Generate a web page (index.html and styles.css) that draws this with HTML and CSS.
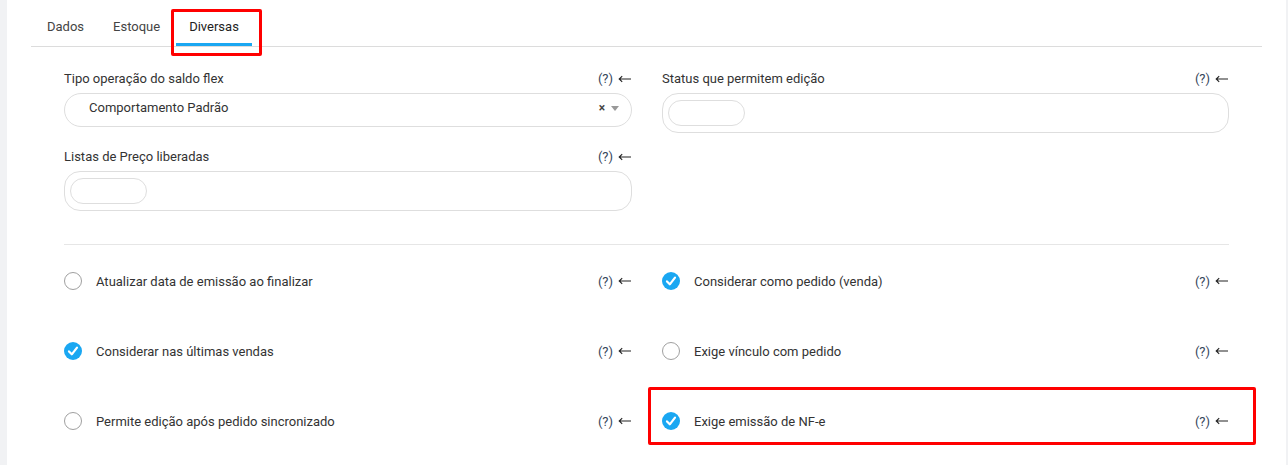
FILE: index.html
```html
<!DOCTYPE html>
<html lang="pt-BR">
<head>
    <meta charset="UTF-8">
    <meta name="viewport" content="width=device-width, initial-scale=1.0">
    <title>Produto - Diversas</title>
    <link rel="stylesheet" href="styles.css">
</head>
<body>
    <div class="card">
        <ul class="tabs">
            <li class="tab">Dados</li>
            <li class="tab">Estoque</li>
            <li class="tab active">Diversas</li>
        </ul>
        <div class="mark mark-tab"></div>

        <div class="form">
            <div class="fields">
                <div class="field">
                    <div class="label-row">
                        <span>Tipo operação do saldo flex</span>
                        <span class="help"><span class="q">(?)</span><svg class="arrow" width="13" height="8" viewBox="0 0 13 8"><path d="M13 4 H1.2 M4.2 1.2 L1.2 4 L4.2 6.8" fill="none" stroke="#222" stroke-width="1.1"/></svg></span>
                    </div>
                    <div class="select">
                        <span class="select-text">Comportamento Padrão</span>
                        <span class="clear">×</span>
                        <span class="caret"></span>
                    </div>
                </div>
                <div class="field">
                    <div class="label-row">
                        <span>Status que permitem edição</span>
                        <span class="help"><span class="q">(?)</span><svg class="arrow" width="13" height="8" viewBox="0 0 13 8"><path d="M13 4 H1.2 M4.2 1.2 L1.2 4 L4.2 6.8" fill="none" stroke="#222" stroke-width="1.1"/></svg></span>
                    </div>
                    <div class="tags"><span class="tag-input"></span></div>
                </div>
                <div class="field">
                    <div class="label-row">
                        <span>Listas de Preço liberadas</span>
                        <span class="help"><span class="q">(?)</span><svg class="arrow" width="13" height="8" viewBox="0 0 13 8"><path d="M13 4 H1.2 M4.2 1.2 L1.2 4 L4.2 6.8" fill="none" stroke="#222" stroke-width="1.1"/></svg></span>
                    </div>
                    <div class="tags"><span class="tag-input"></span></div>
                </div>
            </div>

            <hr class="divider">

            <div class="checks">
                <div class="check">
                    <span class="radio"></span>
                    <span class="check-label">Atualizar data de emissão ao finalizar</span>
                    <span class="help"><span class="q">(?)</span><svg class="arrow" width="13" height="8" viewBox="0 0 13 8"><path d="M13 4 H1.2 M4.2 1.2 L1.2 4 L4.2 6.8" fill="none" stroke="#222" stroke-width="1.1"/></svg></span>
                </div>
                <div class="check">
                    <svg class="tick" width="18" height="18" viewBox="0 0 18 18"><circle cx="9" cy="9" r="9" fill="#1aa7f2"/><path d="M5 9.4 L7.8 12.3 L13 5.6" fill="none" stroke="#fff" stroke-width="2.2" stroke-linecap="round" stroke-linejoin="round"/></svg>
                    <span class="check-label">Considerar como pedido (venda)</span>
                    <span class="help"><span class="q">(?)</span><svg class="arrow" width="13" height="8" viewBox="0 0 13 8"><path d="M13 4 H1.2 M4.2 1.2 L1.2 4 L4.2 6.8" fill="none" stroke="#222" stroke-width="1.1"/></svg></span>
                </div>
                <div class="check">
                    <svg class="tick" width="18" height="18" viewBox="0 0 18 18"><circle cx="9" cy="9" r="9" fill="#1aa7f2"/><path d="M5 9.4 L7.8 12.3 L13 5.6" fill="none" stroke="#fff" stroke-width="2.2" stroke-linecap="round" stroke-linejoin="round"/></svg>
                    <span class="check-label">Considerar nas últimas vendas</span>
                    <span class="help"><span class="q">(?)</span><svg class="arrow" width="13" height="8" viewBox="0 0 13 8"><path d="M13 4 H1.2 M4.2 1.2 L1.2 4 L4.2 6.8" fill="none" stroke="#222" stroke-width="1.1"/></svg></span>
                </div>
                <div class="check">
                    <span class="radio"></span>
                    <span class="check-label">Exige vínculo com pedido</span>
                    <span class="help"><span class="q">(?)</span><svg class="arrow" width="13" height="8" viewBox="0 0 13 8"><path d="M13 4 H1.2 M4.2 1.2 L1.2 4 L4.2 6.8" fill="none" stroke="#222" stroke-width="1.1"/></svg></span>
                </div>
                <div class="check">
                    <span class="radio"></span>
                    <span class="check-label">Permite edição após pedido sincronizado</span>
                    <span class="help"><span class="q">(?)</span><svg class="arrow" width="13" height="8" viewBox="0 0 13 8"><path d="M13 4 H1.2 M4.2 1.2 L1.2 4 L4.2 6.8" fill="none" stroke="#222" stroke-width="1.1"/></svg></span>
                </div>
                <div class="check">
                    <svg class="tick" width="18" height="18" viewBox="0 0 18 18"><circle cx="9" cy="9" r="9" fill="#1aa7f2"/><path d="M5 9.4 L7.8 12.3 L13 5.6" fill="none" stroke="#fff" stroke-width="2.2" stroke-linecap="round" stroke-linejoin="round"/></svg>
                    <span class="check-label">Exige emissão de NF-e</span>
                    <span class="help"><span class="q">(?)</span><svg class="arrow" width="13" height="8" viewBox="0 0 13 8"><path d="M13 4 H1.2 M4.2 1.2 L1.2 4 L4.2 6.8" fill="none" stroke="#222" stroke-width="1.1"/></svg></span>
                </div>
            </div>
        </div>
        <div class="mark mark-nfe"></div>
    </div>
</body>
</html>
```

FILE: styles.css
```css
body {
    margin: 0;
    background: #f1f2f4;
    font-family: Roboto, "Liberation Sans", Arial, sans-serif;
    font-size: 13px;
    color: #333;
}
.card {
    position: relative;
    margin-left: 7px;
    width: 1279px;
    height: 465px;
    background: #fff;
    padding-top: 10px;
    box-sizing: border-box;
    overflow: hidden;
}
.tabs {
    list-style: none;
    display: flex;
    gap: 3px;
    margin: 0 24px;
    padding: 0 0 0 3px;
    border-bottom: 1px solid #dcdcdc;
}
.tab {
    padding: 9px 13px 8px;
    line-height: 16px;
    color: #444;
    border-bottom: 3px solid transparent;
}
.tab.active {
    color: #222;
    border-bottom-color: #1aa7f2;
}
.mark {
    position: absolute;
    border: 3px solid #f00;
    border-radius: 2px;
}
.mark-tab {
    left: 164px;
    top: 9px;
    width: 85px;
    height: 41px;
}
.mark-nfe {
    left: 641px;
    top: 387px;
    width: 602px;
    height: 52px;
}
.form {
    padding: 24px 57px 0;
}
.fields {
    display: grid;
    grid-template-columns: 568px 567px;
    column-gap: 30px;
    row-gap: 16px;
    align-items: start;
}
.label-row {
    display: flex;
    justify-content: space-between;
    line-height: 15px;
    margin-bottom: 7px;
    padding-right: 1px;
}
.help {
    display: flex;
    align-items: center;
    gap: 5px;
    white-space: nowrap;
}
.q {
    color: #34465c;
}
.arrow {
    display: block;
}
.select {
    display: flex;
    align-items: center;
    height: 34px;
    border: 1px solid #dedede;
    border-radius: 17px;
    box-sizing: border-box;
    padding: 0 12px 5px 24px;
}
.select-text {
    flex: 1;
    color: #333;
}
.clear {
    font-weight: bold;
    font-size: 12px;
    color: #444;
    margin-right: 6px;
}
.caret {
    width: 0;
    height: 0;
    border-left: 4px solid transparent;
    border-right: 4px solid transparent;
    border-top: 5px solid #999;
    margin-top: 2px;
}
.tags {
    height: 40px;
    border: 1px solid #dedede;
    border-radius: 16px;
    box-sizing: border-box;
    padding: 6px 5px;
}
.tag-input {
    display: block;
    width: 77px;
    height: 26px;
    border: 1px solid #dedede;
    border-radius: 13px;
    box-sizing: border-box;
}
.divider {
    border: 0;
    border-top: 1px solid #e6e6e6;
    margin: 33px 0 1px;
}
.checks {
    display: grid;
    grid-template-columns: 568px 567px;
    column-gap: 30px;
    grid-auto-rows: 70px;
}
.check {
    display: flex;
    align-items: center;
    padding-right: 1px;
}
.radio {
    width: 18px;
    height: 18px;
    border: 1.5px solid #a0a0a0;
    border-radius: 50%;
    box-sizing: border-box;
}
.check-label {
    flex: 1;
    margin-left: 14px;
}
```
